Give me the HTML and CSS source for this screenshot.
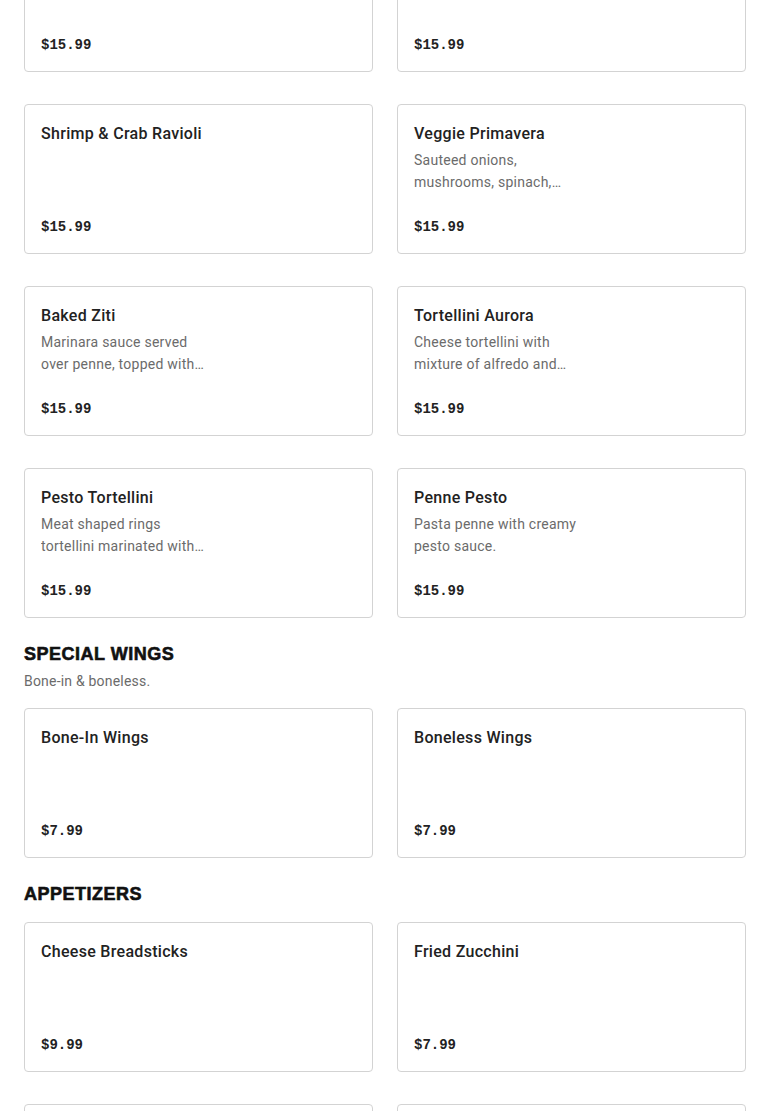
FILE: index.html
```html
<!DOCTYPE html>
<html lang="en">
<head>
<meta charset="utf-8">
<title>Menu</title>
<link rel="stylesheet" href="styles.css">
</head>
<body>
<main class="menu">
  <section class="section section-first">
    <div class="grid">
      <article class="card">
        <h3 class="card-title">Spaghetti &amp; Meatballs</h3>
        <span class="card-price">$15.99</span>
      </article>
      <article class="card">
        <h3 class="card-title">Fettuccine Alfredo</h3>
        <span class="card-price">$15.99</span>
      </article>
      <article class="card">
        <h3 class="card-title">Shrimp &amp; Crab Ravioli</h3>
        <span class="card-price">$15.99</span>
      </article>
      <article class="card">
        <h3 class="card-title">Veggie Primavera</h3>
        <p class="card-desc">Sauteed onions, mushrooms, spinach, peppers and tomatoes.</p>
        <span class="card-price">$15.99</span>
      </article>
      <article class="card">
        <h3 class="card-title">Baked Ziti</h3>
        <p class="card-desc">Marinara sauce served over penne, topped with mozzarella cheese.</p>
        <span class="card-price">$15.99</span>
      </article>
      <article class="card">
        <h3 class="card-title">Tortellini Aurora</h3>
        <p class="card-desc">Cheese tortellini with mixture of alfredo and marinara sauce.</p>
        <span class="card-price">$15.99</span>
      </article>
      <article class="card">
        <h3 class="card-title">Pesto Tortellini</h3>
        <p class="card-desc">Meat shaped rings tortellini marinated with pesto sauce.</p>
        <span class="card-price">$15.99</span>
      </article>
      <article class="card">
        <h3 class="card-title">Penne Pesto</h3>
        <p class="card-desc">Pasta penne with creamy pesto sauce.</p>
        <span class="card-price">$15.99</span>
      </article>
    </div>
  </section>

  <section class="section">
    <header class="section-head">
      <h2 class="section-title">SPECIAL WINGS</h2>
      <p class="section-desc">Bone-in &amp; boneless.</p>
    </header>
    <div class="grid">
      <article class="card">
        <h3 class="card-title">Bone-In Wings</h3>
        <span class="card-price">$7.99</span>
      </article>
      <article class="card">
        <h3 class="card-title">Boneless Wings</h3>
        <span class="card-price">$7.99</span>
      </article>
    </div>
  </section>

  <section class="section">
    <header class="section-head">
      <h2 class="section-title">APPETIZERS</h2>
    </header>
    <div class="grid">
      <article class="card">
        <h3 class="card-title">Cheese Breadsticks</h3>
        <span class="card-price">$9.99</span>
      </article>
      <article class="card">
        <h3 class="card-title">Fried Zucchini</h3>
        <span class="card-price">$7.99</span>
      </article>
      <article class="card">
        <h3 class="card-title">Mozzarella Sticks</h3>
        <span class="card-price">$8.99</span>
      </article>
      <article class="card">
        <h3 class="card-title">Garlic Knots</h3>
        <span class="card-price">$6.99</span>
      </article>
    </div>
  </section>
</main>
</body>
</html>
```
FILE: styles.css
```css
* { box-sizing: border-box; }

html, body {
  margin: 0;
  padding: 0;
  background: #ffffff;
}

body {
  font-family: Roboto, "Liberation Sans", Arial, sans-serif;
  color: #222222;
}

.menu {
  padding: 0 24px;
}

.section {
  margin-top: 23px;
}

.section-first {
  margin-top: -78px;
}

.section-head {
  margin-bottom: 16px;
}

.section-title {
  margin: 0;
  padding-top: 1px;
  font-family: "Liberation Sans", Arial, sans-serif;
  font-weight: 900;
  font-size: 18px;
  line-height: 24px;
  letter-spacing: 0.5px;
  color: #111111;
  -webkit-text-stroke: 0.6px #111111;
}

.section-desc {
  margin: 4px 0 0;
  font-size: 14px;
  line-height: 22px;
  letter-spacing: 0.2px;
  color: #6b6b6b;
}

.grid {
  display: grid;
  grid-template-columns: 1fr 1fr;
  column-gap: 24px;
  row-gap: 32px;
}

.card {
  height: 150px;
  border: 1px solid #d3d3d3;
  border-radius: 4px;
  padding: 17px 16px 16px 16px;
  display: flex;
  flex-direction: column;
  background: #ffffff;
}

.card-title {
  margin: 0;
  font-size: 16px;
  font-weight: 500;
  line-height: 24px;
  letter-spacing: 0.3px;
  color: #222222;
}

.card-desc {
  margin: 3px 0 0;
  max-width: 172px;
  font-size: 14px;
  line-height: 22px;
  letter-spacing: 0.25px;
  color: #6b6b6b;
  display: -webkit-box;
  -webkit-line-clamp: 2;
  -webkit-box-orient: vertical;
  overflow: hidden;
}

.card-price {
  margin-top: auto;
  font-family: "Liberation Mono", "Courier New", monospace;
  font-weight: 700;
  font-size: 14px;
  line-height: 20px;
  color: #222222;
}
```
